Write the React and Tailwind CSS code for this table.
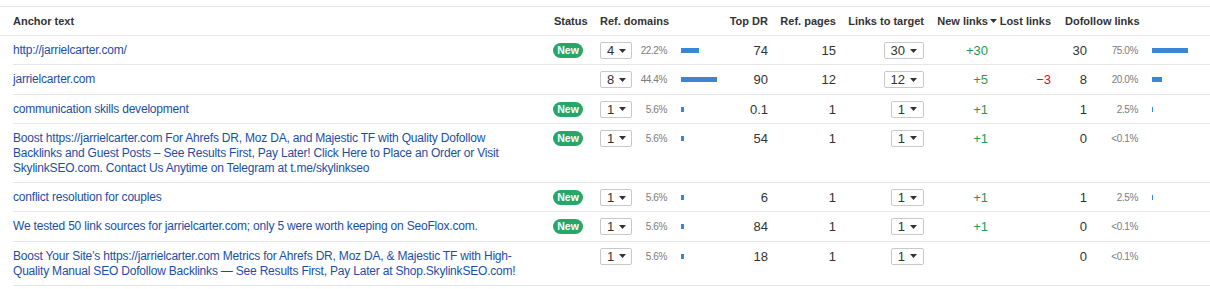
import React from 'react';

const rows = [
  { anchor: 'http://jarrielcarter.com/', isNew: true, rd: '4', rdPct: '22.2%', rdBar: 18, dr: '74', rp: '15', lt: '30', nl: '+30', ll: '', df: '30', dfPct: '75.0%', dfBar: 36 },
  { anchor: 'jarrielcarter.com', isNew: false, rd: '8', rdPct: '44.4%', rdBar: 36, dr: '90', rp: '12', lt: '12', nl: '+5', ll: '−3', df: '8', dfPct: '20.0%', dfBar: 10 },
  { anchor: 'communication skills development', isNew: true, rd: '1', rdPct: '5.6%', rdBar: 3, dr: '0.1', rp: '1', lt: '1', nl: '+1', ll: '', df: '1', dfPct: '2.5%', dfBar: 1 },
  { anchor: 'Boost https://jarrielcarter.com For Ahrefs DR, Moz DA, and Majestic TF with Quality Dofollow Backlinks and Guest Posts – See Results First, Pay Later! Click Here to Place an Order or Visit SkylinkSEO.com. Contact Us Anytime on Telegram at t.me/skylinkseo', isNew: true, rd: '1', rdPct: '5.6%', rdBar: 3, dr: '54', rp: '1', lt: '1', nl: '+1', ll: '', df: '0', dfPct: '<0.1%', dfBar: 0 },
  { anchor: 'conflict resolution for couples', isNew: true, rd: '1', rdPct: '5.6%', rdBar: 3, dr: '6', rp: '1', lt: '1', nl: '+1', ll: '', df: '1', dfPct: '2.5%', dfBar: 1 },
  { anchor: 'We tested 50 link sources for jarrielcarter.com; only 5 were worth keeping on SeoFlox.com.', isNew: true, rd: '1', rdPct: '5.6%', rdBar: 3, dr: '84', rp: '1', lt: '1', nl: '+1', ll: '', df: '0', dfPct: '<0.1%', dfBar: 0 },
  { anchor: 'Boost Your Site’s https://jarrielcarter.com Metrics for Ahrefs DR, Moz DA, & Majestic TF with High-Quality Manual SEO Dofollow Backlinks — See Results First, Pay Later at Shop.SkylinkSEO.com!', isNew: false, rd: '1', rdPct: '5.6%', rdBar: 3, dr: '18', rp: '1', lt: '1', nl: '', ll: '', df: '0', dfPct: '<0.1%', dfBar: 0 },
];

function Caret() {
  return (
    <svg width="7" height="4" viewBox="0 0 7 4" className="shrink-0">
      <path d="M0 0h7L3.5 4z" fill="#333" />
    </svg>
  );
}

function Dropdown({ value, fixed }) {
  return (
    <div
      className={`-my-px flex h-[17px] items-center gap-[5px] rounded-[2px] border border-[#c9c9c9] bg-white pl-[6px] pr-[6px] text-[13px] text-[#333] ${fixed ? 'w-[32px]' : ''}`}
    >
      <span>{value}</span>
      <Caret />
    </div>
  );
}

function Bar({ width }) {
  if (!width) return null;
  return <div className="h-[5px] bg-[#3a86d4]" style={{ width }} />;
}

export default function App() {
  return (
    <div className="min-h-screen bg-white pt-[6px] text-[#333]" style={{ fontFamily: '"Liberation Sans", Arial, sans-serif' }}>
      {/* header */}
      <div className="flex h-[30px] items-center border-y border-[#e6e6e6] pl-[13px] text-[11px] font-bold">
        <div className="w-[527px]">Anchor text</div>
        <div className="w-[60px] pl-[14px]">Status</div>
        <div className="w-[120px]">Ref. domains</div>
        <div className="w-[48px] text-right">Top DR</div>
        <div className="w-[68px] text-right">Ref. pages</div>
        <div className="w-[88px] text-right">Links to target</div>
        <div className="flex w-[73px] items-center justify-end gap-[2px]">
          <span>New links</span>
          <Caret />
        </div>
        <div className="w-[54px] text-right">Lost links</div>
        <div className="flex-1 pl-[14px]">Dofollow links</div>
      </div>

      {/* body */}
      <div className="ml-[13px]">
        {rows.map((r, i) => (
          <div key={i} className="flex items-start border-b border-[#e6e6e6] pb-[6.3px] pt-[7px] leading-[15px]">
            <div className="w-[527px]">
              <div className="max-w-[515px] text-[12px] tracking-[-0.2px] text-[#1c4fa3]">{r.anchor}</div>
            </div>
            <div className="w-[60px] pl-[13px]">
              {r.isNew && (
                <span className="flex h-[15px] w-[30px] items-center justify-center rounded-full bg-[#28a669] text-[10.5px] font-bold text-white">
                  New
                </span>
              )}
            </div>
            <div className="flex h-[15px] w-[120px] items-center">
              <Dropdown value={r.rd} fixed />
              <div className="w-[35px] text-right text-[10px] tracking-[-0.4px] text-[#7c7c7c]">{r.rdPct}</div>
              <div className="ml-[14px]">
                <Bar width={r.rdBar} />
              </div>
            </div>
            <div className="w-[48px] text-right text-[13px]">{r.dr}</div>
            <div className="w-[68px] text-right text-[13px]">{r.rp}</div>
            <div className="flex h-[15px] w-[88px] items-center justify-end">
              <Dropdown value={r.lt} />
            </div>
            <div className="w-[73px] pr-[9px] text-right text-[13px] text-[#1f9a50]">{r.nl}</div>
            <div className="w-[54px] text-right text-[13px] text-[#d0112b]">{r.ll}</div>
            <div className="flex flex-1 items-center">
              <div className="w-[36px] text-right text-[13px]">{r.df}</div>
              <div className="w-[51px] text-right text-[10px] tracking-[-0.4px] text-[#7c7c7c]">{r.dfPct}</div>
              <div className="ml-[14px]">
                <Bar width={r.dfBar} />
              </div>
            </div>
          </div>
        ))}
      </div>
    </div>
  );
}
